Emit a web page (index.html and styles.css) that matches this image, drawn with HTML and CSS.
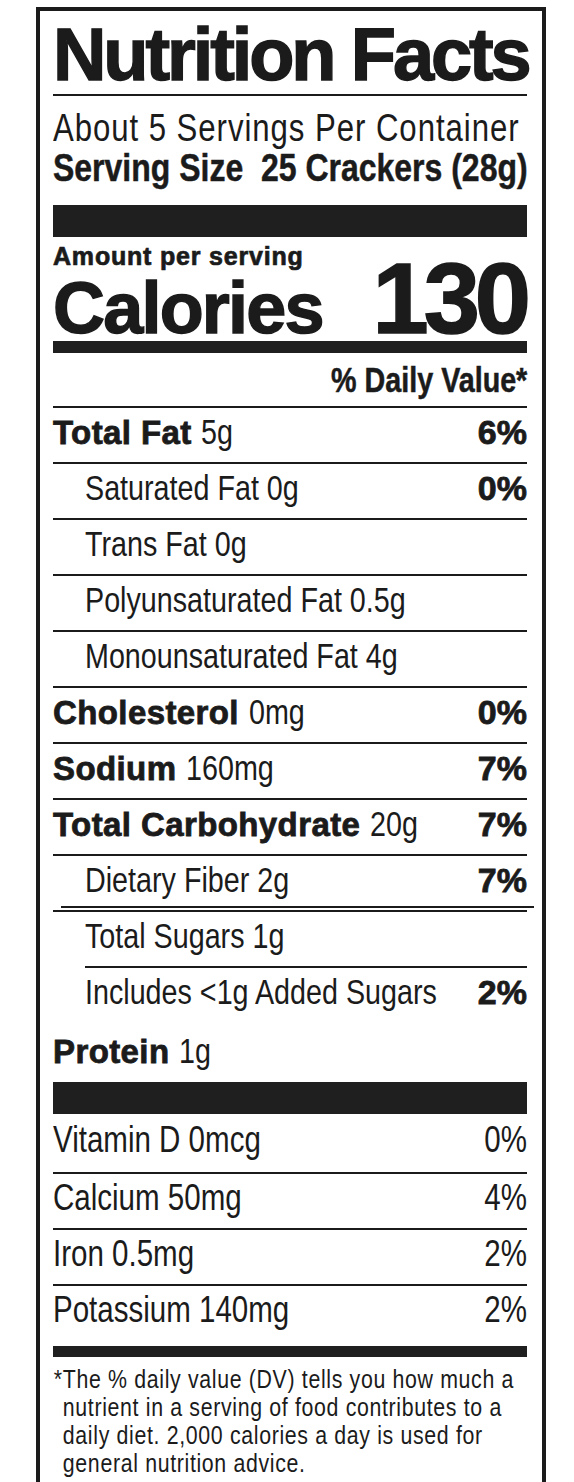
FILE: index.html
```
<!DOCTYPE html>
<html lang="en">
<head>
    <meta charset="UTF-8">
    <meta name="viewport" content="width=device-width, initial-scale=1.0">
    <title>Nutrition Facts</title>
    <link rel="stylesheet" href="styles.css">
</head>
<body>
    <div class="label">
        <h1 class="title">Nutrition Facts</h1>

        <!-- servings -->
        <div class="servings">
            <p class="per-container"><span class="cond">About 5 Servings Per Container</span></p>
            <p class="serving-size"><span class="cond">Serving Size&nbsp; 25 Crackers (28g)</span></p>
        </div>
        <div class="bar bar-lg"></div>

        <!-- calories -->
        <div class="calories">
            <div class="calories-left">
                <p class="amount">Amount per serving</p>
                <p class="calories-label">Calories</p>
            </div>
            <p class="calories-value">130</p>
        </div>
        <div class="bar bar-md"></div>

        <p class="dv-head"><span class="cond right">% Daily Value*</span></p>

        <!-- nutrients -->
        <div class="row"><span class="txt"><b class="name">Total Fat</b> <span class="cond">5g</span></span><b class="pct">6%</b></div>
        <div class="row sub"><span class="txt"><span class="cond">Saturated Fat 0g</span></span><b class="pct">0%</b></div>
        <div class="row sub"><span class="txt"><span class="cond">Trans Fat 0g</span></span></div>
        <div class="row sub"><span class="txt"><span class="cond">Polyunsaturated Fat 0.5g</span></span></div>
        <div class="row sub"><span class="txt"><span class="cond">Monounsaturated Fat 4g</span></span></div>
        <div class="row"><span class="txt"><b class="name">Cholesterol</b> <span class="cond">0mg</span></span><b class="pct">0%</b></div>
        <div class="row"><span class="txt"><b class="name">Sodium</b> <span class="cond">160mg</span></span><b class="pct">7%</b></div>
        <div class="row"><span class="txt"><b class="name">Total Carbohydrate</b> <span class="cond">20g</span></span><b class="pct">7%</b></div>
        <div class="row sub fiber"><span class="txt"><span class="cond">Dietary Fiber 2g</span></span><b class="pct">7%</b></div>
        <div class="row sub"><span class="txt"><span class="cond">Total Sugars 1g</span></span></div>
        <div class="row added"><span class="txt"><span class="cond">Includes &lt;1g Added Sugars</span></span><b class="pct">2%</b></div>
        <div class="row protein"><span class="txt"><b class="name">Protein</b> <span class="cond">1g</span></span></div>
        <div class="bar bar-lg"></div>

        <!-- vitamins -->
        <div class="row vit first"><span class="txt"><span class="cond">Vitamin D 0mcg</span></span><span class="cond right">0%</span></div>
        <div class="row vit"><span class="txt"><span class="cond">Calcium 50mg</span></span><span class="cond right">4%</span></div>
        <div class="row vit"><span class="txt"><span class="cond">Iron 0.5mg</span></span><span class="cond right">2%</span></div>
        <div class="row vit last"><span class="txt"><span class="cond">Potassium 140mg</span></span><span class="cond right">2%</span></div>
        <div class="bar bar-sm"></div>

        <div class="footnote">
            <p class="footnote-text">*The % daily value (DV) tells you how much a<br>nutrient in a serving of food contributes to a<br>daily diet. 2,000 calories a day is used for<br>general nutrition advice.</p>
        </div>
    </div>
</body>
</html>
```

FILE: styles.css
```
* {
    margin: 0;
    padding: 0;
    box-sizing: border-box;
}

body {
    background: #fff;
    color: #1b1b1b;
    font-family: "Liberation Sans", Arial, sans-serif;
    overflow: hidden;
}

.label {
    width: 510px;
    height: 1475px;
    margin: 7px 0 0 36px;
    padding: 0 15px 0 13px;
    border: 4px solid #1b1b1b;
    border-bottom: none;
    overflow: hidden;
}

b {
    font-weight: 700;
}

/* condensed face: Liberation Sans squeezed to Arial Narrow width */
.cond {
    display: inline-block;
    transform: scaleX(0.82);
    transform-origin: left center;
    white-space: nowrap;
}

.cond.right {
    transform-origin: right center;
}

/* heavy face (Helvetica Black look) */
.title,
.amount,
.calories-label,
.calories-value,
.name,
.pct {
    font-weight: 700;
}

.title {
    font-size: 74px;
    line-height: 78px;
    padding-top: 5px;
    letter-spacing: -3.1px;
    -webkit-text-stroke: 1.4px #1b1b1b;
    border-bottom: 2px solid #1b1b1b;
    white-space: nowrap;
}

/* servings */
.servings {
    padding-top: 12px;
    height: 109px;
}

.per-container {
    font-size: 38px;
    line-height: 40px;
    letter-spacing: 1.15px;
}

.serving-size {
    font-size: 39px;
    line-height: 40px;
    font-weight: 700;
    -webkit-text-stroke: 0.5px #1b1b1b;
}

.bar {
    background: #1f1f1f;
}

.bar-lg {
    height: 32px;
}

.bar-md {
    height: 12px;
}

.bar-sm {
    height: 11px;
}

/* calories */
.calories {
    display: flex;
    justify-content: space-between;
    align-items: last baseline;
    height: 104px;
}

.amount {
    font-size: 25px;
    line-height: 38px;
    letter-spacing: 0.8px;
    -webkit-text-stroke: 0.7px #1b1b1b;
    white-space: nowrap;
}

.calories-label {
    font-size: 72px;
    line-height: 66px;
    letter-spacing: -1.8px;
    -webkit-text-stroke: 1.4px #1b1b1b;
}

.calories-value {
    font-size: 101px;
    line-height: 80px;
    letter-spacing: -5px;
    margin-right: 1px;
    -webkit-text-stroke: 1.6px #1b1b1b;
}

.dv-head {
    font-size: 35px;
    line-height: 53px;
    font-weight: 700;
    text-align: right;
    -webkit-text-stroke: 0.5px #1b1b1b;
}

/* nutrient rows */
.row {
    display: flex;
    justify-content: space-between;
    align-items: baseline;
    height: 56px;
    padding-bottom: 6px;
    border-top: 2px solid #1b1b1b;
    font-size: 35px;
    line-height: 48px;
    white-space: nowrap;
}

.row .txt {
    flex: 1;
    min-width: 0;
}

.row .name {
    font-size: 33px;
    letter-spacing: 0.4px;
    -webkit-text-stroke: 0.8px #1b1b1b;
}

.row .pct {
    font-size: 34px;
    -webkit-text-stroke: 0.8px #1b1b1b;
}

.row.sub {
    padding-left: 32px;
}

.row.fiber {
    position: relative;
}

.row.fiber::after {
    content: "";
    position: absolute;
    top: 50px;
    left: 8px;
    right: -7px;
    height: 2px;
    background: #1b1b1b;
}

.row.added {
    margin-left: 32px;
}

.row.protein {
    height: 60px;
    padding-top: 3px;
    border-top-color: transparent;
}

.row.vit {
    font-size: 36px;
}

.row.vit.first {
    height: 58px;
    border-top-color: transparent;
}

.row.vit.last {
    height: 62px;
}

/* footnote */
.footnote {
    padding-top: 8px;
}

.footnote-text {
    width: 122%;
    padding-left: 12px;
    text-indent: -11px;
    font-size: 26px;
    line-height: 28px;
    letter-spacing: 0.8px;
    transform: scaleX(0.82);
    transform-origin: left top;
}
```
